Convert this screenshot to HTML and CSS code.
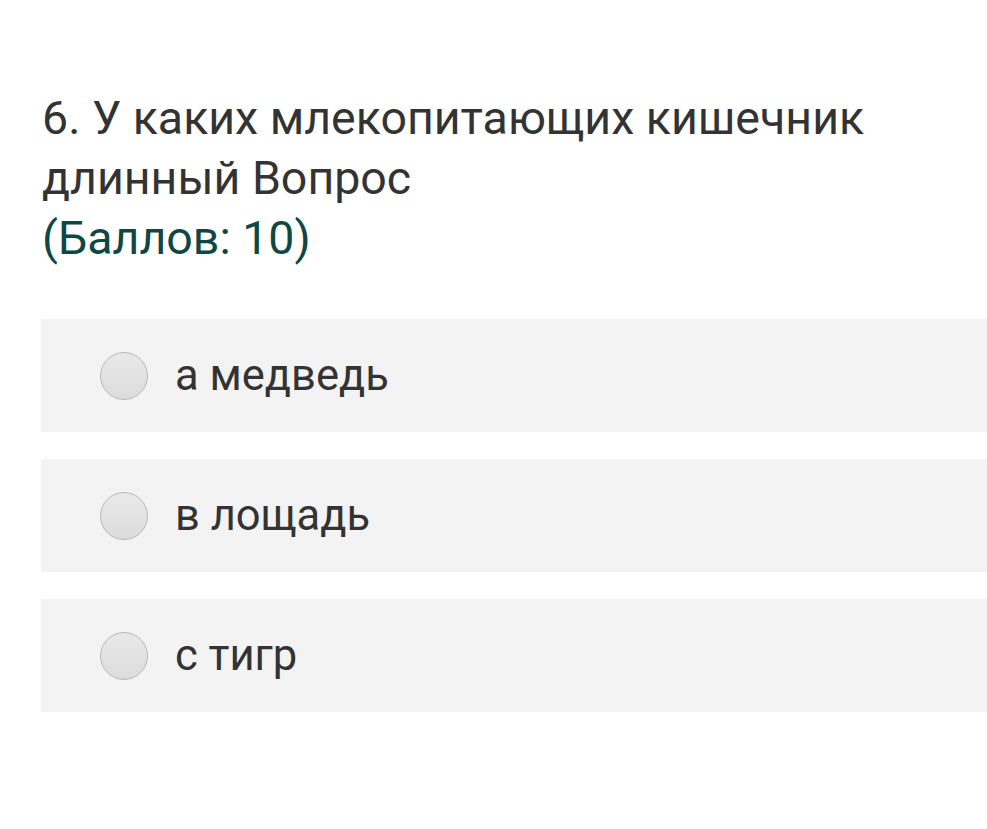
FILE: index.html
```html
<!DOCTYPE html>
<html lang="ru">
<head>
<meta charset="utf-8">
<link rel="stylesheet" href="styles.css">
</head>
<body>
<div class="page">
  <div class="question">
    <div class="qtext">6. У каких млекопитающих кишечник длинный Вопрос</div>
    <div class="points">(Баллов: 10)</div>
  </div>
  <div class="options">
    <label class="option"><span class="radio"></span><span class="otext">а медведь</span></label>
    <label class="option"><span class="radio"></span><span class="otext">в лощадь</span></label>
    <label class="option"><span class="radio"></span><span class="otext">с тигр</span></label>
  </div>
</div>
</body>
</html>
```
FILE: styles.css
```css
html, body {
  margin: 0;
  padding: 0;
  background: #ffffff;
}
.page {
  padding: 88px 0 0 41px;
  font-family: Roboto, "Noto Sans", sans-serif;
}
.question {
  padding-left: 1px;
  font-size: 46.5px;
  line-height: 60px;
  color: #333333;
}
.qtext {
  max-width: 880px;
}
.points {
  color: #0e4744;
}
.options {
  margin-top: 51px;
  display: flex;
  flex-direction: column;
  gap: 27px;
}
.option {
  display: flex;
  align-items: center;
  height: 113px;
  background: #f3f3f3;
  padding-left: 59px;
}
.radio {
  width: 46px;
  height: 46px;
  border-radius: 50%;
  border: 1px solid #b9b9b9;
  background: linear-gradient(#e9e9e9, #dcdcdc);
  flex-shrink: 0;
}
.otext {
  margin-left: 27px;
  font-size: 43.5px;
  color: #333333;
}
```
